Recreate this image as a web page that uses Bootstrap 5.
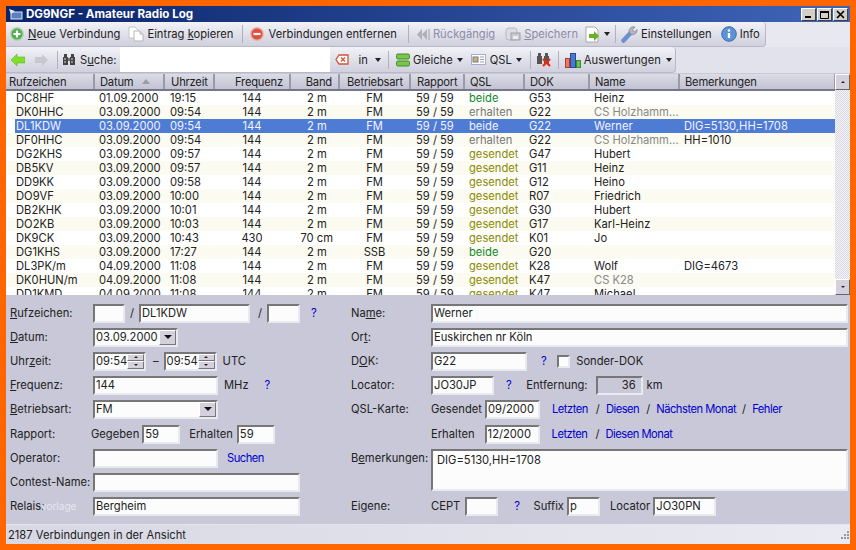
<!DOCTYPE html>
<html lang="de"><head><meta charset="utf-8"><title>DG9NGF - Amateur Radio Log</title>
<link rel="stylesheet" href="https://cdn.jsdelivr.net/npm/bootstrap@5.3.0/dist/css/bootstrap.min.css">
<style>
html,body{height:100%}
body{background:#ff6600;padding:6px;font:11.2px/14px Inter,"Noto Sans",sans-serif;color:#222;overflow:hidden}
.app-win{height:538px;background:#c8c8d8;display:flex;flex-direction:column;overflow:hidden}
.title-bar{height:16px;flex:none;background:linear-gradient(90deg,#0a246a,#3f65b8);color:#fff;font-weight:700;font-size:11.6px;display:flex;align-items:center;padding:0 2px 0 2px;gap:3px}
.title-btns{margin-left:auto;display:flex;gap:1px}
.title-btn{width:15px;height:13px;background:#d4d0c8;border:1px solid;border-color:#fff #404040 #404040 #fff;display:flex;align-items:center;justify-content:center}
.tool-band{height:25px;flex:none;background:#e8e8f0;display:flex}
.tool-band.band-two{background:#e2e2ec;height:26px}
.tool-pill{height:100%;display:flex;align-items:center;background:linear-gradient(#f2f2f7,#d0d0de);border-radius:0 4px 4px 0;border-right:1px solid #b8b8c8;border-bottom:1px solid #b8b8c8}
.p1{width:760px;padding-left:4px}.p2{width:670px;padding-left:5px}
.tool-sep{width:1px;height:18px;background:#b0b0c0;flex:none}
.tx{white-space:nowrap}.dim{color:#8c8ca8}
.search-box{width:210px;height:100%;background:#fff;flex:none}
.tri{width:0;height:0;border:3px solid transparent;border-top:4px solid #222;border-bottom:0;flex:none}
.g3{margin-left:3px}.g4{margin-left:4px}.g5{margin-left:5px}.g6{margin-left:6px}.g7{margin-left:7px}.g8{margin-left:8px}.g9{margin-left:9px}.g10{margin-left:10px}.g11{margin-left:11px}.g12{margin-left:12px}.g14{margin-left:14px}.g15{margin-left:15px}.g16{margin-left:16px}
.list-wrap{height:221px;flex:none;display:flex;background:#fff;margin-top:1px;overflow:hidden}
.list-main{width:829px;overflow:hidden;flex:none}
.log-tbl{table-layout:fixed;width:829px;border-collapse:collapse;margin:0}
.log-tbl th{height:16px;background:linear-gradient(#dcdce6,#c2c2d2);font-weight:400;letter-spacing:-.2px;padding:0 2px 0 3px;border-right:2px solid #9a9aac;border-bottom:2px solid #77778a;white-space:nowrap;overflow:hidden;position:relative}
.log-tbl td{height:14px;padding:0;white-space:nowrap;overflow:hidden;line-height:14px;border:0;background:transparent;color:#222}
.log-tbl tbody tr:nth-child(even){background:#fbfbf2}
.log-tbl tr.row-sel{background:transparent}
.log-tbl tr.row-sel td{color:#f2f4ff;background:#4e7bd4}
.log-tbl tr.row-sel td:first-child{background:linear-gradient(90deg,#fff 9px,#4e7bd4 9px)}
.r{text-align:right;padding-right:6px!important}.c{text-align:center}.pad-a{padding-left:10px!important}.pad-b{padding-left:5px!important}.pad-c{padding-left:6px!important}
.q-b{color:#118a2a!important}.q-e{color:#777!important}.q-g{color:#8b8b00!important}.grey{color:#888!important}
.sort-up{position:absolute;right:13px;top:5px;width:0;height:0;border:4px solid transparent;border-bottom:5px solid #9a9aaa;border-top:0}
.scroll-v{width:15px;flex:none;display:flex;flex-direction:column;background:repeating-conic-gradient(#d8d8e2 0 25%,#f4f4f8 0 50%) 0 0/2px 2px}
.scr-btn{height:16px;background:#d4d0dc;border:1px solid;border-color:#fff #666 #666 #fff;display:flex;align-items:center;justify-content:center;flex:none}
.scr-fill{flex:1}
.form-area{flex:1;display:flex;background:#c8c8d8;min-height:0;padding-top:6px}
.col-l{width:339px;flex:none;padding-left:4px}.col-r{flex:1;padding-left:6px;padding-right:2px}
.f-row{height:24px;display:flex;align-items:center;white-space:nowrap;position:relative}
.f-row-gap{margin-top:1px}
.f-lbl{width:83px;flex:none}.f-lbl-r{width:80px;flex:none}.f-lbl-s{width:81px;flex:none}
.inp{height:19px;background:#fcfcfc;border:2px solid;border-color:#777 #e9e9f0 #e9e9f0 #777;border-radius:0;padding:0 1px;font:inherit;color:#222;flex:none;box-shadow:none;min-height:0;display:block}
.inp:focus{background:#fcfcfc;border-color:#777 #e9e9f0 #e9e9f0 #777;box-shadow:none}
.inp-ro{background:#c8c8d8;text-align:right;padding-right:5px}
.w32{width:32px}.w33{width:33px}.w38{width:38px}.w55{width:55px}.w63{width:63px}.w96{width:96px}.w47{width:47px}.w111{width:111px}.w125{width:125px}.w207{width:207px}.wfull{flex:1;width:auto}
.lnk{color:#0000cc;text-decoration:none;letter-spacing:-.5px}
.joined{display:flex;height:19px;flex:none;background:#fcfcfc;border:2px solid;border-color:#777 #e9e9f0 #e9e9f0 #777;padding-left:1px;align-items:center;justify-content:space-between}
.j53{width:53px}.j85{width:85px}.j125{width:125px}
.spin{display:flex;flex-direction:column;width:17px;height:15px;flex:none}
.spin i{flex:1;background:#d4d0dc;border:1px solid;border-color:#fff #777 #777 #fff;display:flex;align-items:center;justify-content:center}
.up-t,.dn-t{width:0;height:0;border:2px solid transparent}
.up-t{border-bottom:2px solid #222;border-top:0}.dn-t{border-top:2px solid #222;border-bottom:0}
.drop{width:17px;height:15px;flex:none;background:#d4d0dc;border:1px solid;border-color:#fff #777 #777 #fff;display:flex;align-items:center;justify-content:center}
.dn-b{width:0;height:0;border:4px solid transparent;border-top:4px solid #111;border-bottom:0}
.chk{width:13px;height:13px;flex:none;background:#fcfcfc;border:2px solid;border-color:#777 #e9e9f0 #e9e9f0 #777;border-radius:0;appearance:none}
.ghost{position:absolute;left:31px;top:5px;color:#e6e6ee;font-size:10px}
.memo-row{height:48px;display:flex;white-space:nowrap;margin-bottom:0}
.memo-lbl{width:80px;padding-top:5px;flex:none}
.memo-box{flex:1;height:42px;padding:2px 4px;resize:none;line-height:14px;margin-top:3px}
.status-bar{height:20px;flex:none;background:linear-gradient(90deg,#d8d8e4,#eaeaf2);border-top:1px solid #e4e4ec;padding:1px 0 0 2px;display:flex;align-items:center;justify-content:space-between}
svg{flex:none;display:block}
</style></head><body>
<div class="app-win">
 <div class="title-bar">
  <svg width="15" height="13" viewBox="0 0 15 13"><rect x="3" y="4" width="11" height="7" fill="#5b7fc0" stroke="#dfe6f5"/><path d="M1 1l6 2-4 3z" fill="#e8e8f0"/></svg>
  <span>DG9NGF - Amateur Radio Log</span>
  <div class="title-btns">
   <div class="title-btn"><svg width="9" height="9"><rect x="1" y="6" width="6" height="2" fill="#000"/></svg></div>
   <div class="title-btn"><svg width="9" height="9"><path d="M.5 1.5h8v7h-8z" fill="none" stroke="#000"/><rect y="1" width="9" height="2"/></svg></div>
   <div class="title-btn"><svg width="9" height="9"><path d="M1 1l7 7M8 1l-7 7" stroke="#000" stroke-width="1.7"/></svg></div>
  </div>
 </div>
 <div class="tool-band"><div class="tool-pill p1">
  <svg width="14" height="14" viewBox="0 0 14 14"><circle cx="7" cy="7" r="7" fill="#b4d2b4"/><circle cx="7" cy="7" r="5.500" fill="#4fae4f"/><path d="M7 3.500v7M3.500 7h7" stroke="#fff" stroke-width="2.200"/></svg>
  <span class="tx g4"><u>N</u>eue Verbindung</span>
  <svg class="g8" width="16" height="16" viewBox="0 0 16 16"><path d="M1 1h6l3 3v8H1z" fill="#fff" stroke="#c4c4cc"/><path d="M6 5h6l3 3v7H6z" fill="#fff" stroke="#b4b4c0"/><path d="M12 5v3h3" fill="#e4e4ea" stroke="#b4b4c0"/></svg>
  <span class="tx g3">Eintrag <u>k</u>opieren</span>
  <span class="tool-sep g9"></span>
  <svg class="g7" width="14" height="14" viewBox="0 0 14 14"><circle cx="7" cy="7" r="7" fill="#e6b4aa"/><circle cx="7" cy="7" r="5.500" fill="#e0503f"/><path d="M3.500 7h7" stroke="#fff" stroke-width="2.200"/></svg>
  <span class="tx g4">Verbindungen entfernen</span>
  <span class="tool-sep g11"></span>
  <svg class="g7" width="14" height="13" viewBox="0 0 14 13"><path d="M6 1v11L1 6.500zM11 1v11L6 6.500z" fill="#b0b0bc"/><rect x="12" y="1" width="2" height="11" fill="#c0c0cc"/></svg>
  <span class="tx g3 dim">Rückgängig</span>
  <svg class="g10" width="16" height="14" viewBox="0 0 16 14"><rect x="1" y="1" width="11" height="12" rx="3" fill="#dcdce4" stroke="#b8b8c0"/><rect x="6" y="6" width="9" height="7" fill="#c8c8d2" stroke="#a0a0aa"/><rect x="8" y="9" width="5" height="3" fill="#eee"/></svg>
  <span class="tx g3 dim"><u>S</u>peichern</span>
  <svg class="g7" width="16" height="17" viewBox="0 0 16 17"><path d="M1 1h9l3 3v12H1z" fill="#fff" stroke="#aaa"/><path d="M4 8h5V5l5 5-5 5v-3H4z" fill="#6ab02a"/></svg>
  <span class="tri g3"></span>
  <span class="tool-sep g5"></span>
  <svg class="g5" width="17" height="17" viewBox="0 0 17 17"><path d="M2.500 14.500l7.500-8" stroke="#6b90d0" stroke-width="4.500" stroke-linecap="round"/><path d="M8 6a4.500 4.500 0 0 1 6-5l-2.500 3 2 2 2.500-2.500a4.500 4.500 0 0 1-6 5z" fill="#b4b4c4" stroke="#777" stroke-width=".6"/></svg>
  <span class="tx g3">Einstellungen</span>
  <svg class="g9" width="16" height="16" viewBox="0 0 16 16"><circle cx="8" cy="8" r="7.300" fill="#5d92d6" stroke="#3c6cb0"/><circle cx="8" cy="4.500" r="1.300" fill="#fff"/><path d="M8 7v5" stroke="#fff" stroke-width="2.400"/></svg>
  <span class="tx g3">Info</span>
 </div></div>
 <div class="tool-band band-two"><div class="tool-pill p2">
  <svg width="14" height="12" viewBox="0 0 14 12"><path d="M0 6l6-6v3h8v6H6v3z" fill="#7ee02a" stroke="#5aa818" stroke-width=".5"/></svg>
  <svg class="g10" width="13" height="12" viewBox="0 0 13 12"><path d="M13 6L7 0v3H0v6h7v3z" fill="#c8c8d0"/></svg>
  <span class="tool-sep g9"></span>
  <svg class="g4" width="14" height="13" viewBox="0 0 14 13"><path d="M1 4h5v8H1zM8 4h5v8H8zM2 1h3v3H2zM9 1h3v3H9z" fill="#444"/><rect x="6" y="5" width="2" height="3" fill="#777"/><path d="M2 6h2M9 6h2M2 9h2M9 9h2" stroke="#ddd"/></svg>
  <span class="tx g4">S<u>u</u>che:</span>
  <div class="search-box g3"></div>
  <svg class="g5" width="14" height="11" viewBox="0 0 14 11"><path d="M4 1h9v9H4L1 5.500z" fill="#fff" stroke="#d0523a" stroke-width="1.300"/><path d="M6 3.500l4 4M10 3.500l-4 4" stroke="#d0523a" stroke-width="1.300"/></svg>
  <span class="tx g10">in</span><span class="tri g7"></span>
  <span class="tool-sep g7"></span>
  <svg class="g7" width="14" height="14" viewBox="0 0 14 14"><rect x=".5" y="1" width="13" height="5" rx="1.500" fill="#79c64a" stroke="#3f8a2a"/><rect x=".5" y="8" width="13" height="5" rx="1.500" fill="#79c64a" stroke="#3f8a2a"/></svg>
  <span class="tx g3">Gleiche</span><span class="tri g4"></span>
  <svg class="g8" width="15" height="11" viewBox="0 0 15 11"><rect x=".5" y=".5" width="14" height="10" fill="#fff" stroke="#aac"/><rect x="2" y="3" width="5" height="5" fill="#e0b040" stroke="#5b7fc0"/><path d="M9 3h4M9 5.500h4M9 8h4" stroke="#99a"/></svg>
  <span class="tx g4">QSL</span><span class="tri g4"></span>
  <span class="tool-sep g8"></span>
  <svg class="g5" width="16" height="15" viewBox="0 0 16 15"><path d="M1 4h5v8H1zM8 4h5v8H8zM2 1h3v3H2zM9 1h3v3H9z" fill="#555"/><path d="M7 7l7 7M14 7l-7 7" stroke="#e02a1a" stroke-width="2.200"/></svg>
  <span class="tool-sep g6"></span>
  <svg class="g6" width="16" height="16" viewBox="0 0 16 16"><rect x=".5" y="6.500" width="4" height="9" fill="#e87a68" stroke="#b03a30"/><rect x="5.500" y="1.500" width="5" height="14" fill="#4a78d0" stroke="#2a4a90"/><rect x="11.500" y="8.500" width="4" height="7" fill="#6cc050" stroke="#3a8a30"/></svg>
  <span class="tx g3">Auswertungen</span><span class="tri g5"></span>
 </div></div>
 <div class="list-wrap">
  <div class="list-main">
  <table class="log-tbl">
   <colgroup><col style="width:88px"><col style="width:70px"><col style="width:50px"><col style="width:76px"><col style="width:49px"><col style="width:71px"><col style="width:54px"><col style="width:60px"><col style="width:65px"><col style="width:90px"><col style="width:156px"></colgroup>
   <thead><tr><th>Rufzeichen</th><th class="pad-b">Datum<span class="sort-up"></span></th><th class="pad-c">Uhrzeit</th><th class="r">Frequenz</th><th class="r">Band</th><th class="c">Betriebsart</th><th class="pad-c">Rapport</th><th class="pad-b">QSL</th><th class="pad-b">DOK</th><th class="pad-b">Name</th><th class="pad-b">Bemerkungen</th></tr></thead>
   <tbody id="rows">
   <tr><td class="pad-a">DC8HF</td><td class="pad-b">01.09.2000</td><td class="pad-c">19:15</td><td class="c">144</td><td class="r">2 m&nbsp;&nbsp;</td><td class="c">FM</td><td class="pad-c">59 / 59</td><td class="pad-b q-b">beide</td><td class="pad-b">G53</td><td class="pad-b">Heinz</td><td class="pad-b"></td></tr>
   <tr><td class="pad-a">DK0HHC</td><td class="pad-b">03.09.2000</td><td class="pad-c">09:54</td><td class="c">144</td><td class="r">2 m&nbsp;&nbsp;</td><td class="c">FM</td><td class="pad-c">59 / 59</td><td class="pad-b q-e">erhalten</td><td class="pad-b">G22</td><td class="pad-b grey">CS Holzhamm…</td><td class="pad-b"></td></tr>
   <tr class="row-sel"><td class="pad-a">DL1KDW</td><td class="pad-b">03.09.2000</td><td class="pad-c">09:54</td><td class="c">144</td><td class="r">2 m&nbsp;&nbsp;</td><td class="c">FM</td><td class="pad-c">59 / 59</td><td class="pad-b">beide</td><td class="pad-b">G22</td><td class="pad-b">Werner</td><td class="pad-b">DIG=5130,HH=1708</td></tr>
   <tr><td class="pad-a">DF0HHC</td><td class="pad-b">03.09.2000</td><td class="pad-c">09:54</td><td class="c">144</td><td class="r">2 m&nbsp;&nbsp;</td><td class="c">FM</td><td class="pad-c">59 / 59</td><td class="pad-b q-e">erhalten</td><td class="pad-b">G22</td><td class="pad-b grey">CS Holzhamm…</td><td class="pad-b">HH=1010</td></tr>
   <tr><td class="pad-a">DG2KHS</td><td class="pad-b">03.09.2000</td><td class="pad-c">09:57</td><td class="c">144</td><td class="r">2 m&nbsp;&nbsp;</td><td class="c">FM</td><td class="pad-c">59 / 59</td><td class="pad-b q-g">gesendet</td><td class="pad-b">G47</td><td class="pad-b">Hubert</td><td class="pad-b"></td></tr>
   <tr><td class="pad-a">DB5KV</td><td class="pad-b">03.09.2000</td><td class="pad-c">09:57</td><td class="c">144</td><td class="r">2 m&nbsp;&nbsp;</td><td class="c">FM</td><td class="pad-c">59 / 59</td><td class="pad-b q-g">gesendet</td><td class="pad-b">G11</td><td class="pad-b">Heinz</td><td class="pad-b"></td></tr>
   <tr><td class="pad-a">DD9KK</td><td class="pad-b">03.09.2000</td><td class="pad-c">09:58</td><td class="c">144</td><td class="r">2 m&nbsp;&nbsp;</td><td class="c">FM</td><td class="pad-c">59 / 59</td><td class="pad-b q-g">gesendet</td><td class="pad-b">G12</td><td class="pad-b">Heino</td><td class="pad-b"></td></tr>
   <tr><td class="pad-a">DO9VF</td><td class="pad-b">03.09.2000</td><td class="pad-c">10:00</td><td class="c">144</td><td class="r">2 m&nbsp;&nbsp;</td><td class="c">FM</td><td class="pad-c">59 / 59</td><td class="pad-b q-g">gesendet</td><td class="pad-b">R07</td><td class="pad-b">Friedrich</td><td class="pad-b"></td></tr>
   <tr><td class="pad-a">DB2KHK</td><td class="pad-b">03.09.2000</td><td class="pad-c">10:01</td><td class="c">144</td><td class="r">2 m&nbsp;&nbsp;</td><td class="c">FM</td><td class="pad-c">59 / 59</td><td class="pad-b q-g">gesendet</td><td class="pad-b">G30</td><td class="pad-b">Hubert</td><td class="pad-b"></td></tr>
   <tr><td class="pad-a">DO2KB</td><td class="pad-b">03.09.2000</td><td class="pad-c">10:03</td><td class="c">144</td><td class="r">2 m&nbsp;&nbsp;</td><td class="c">FM</td><td class="pad-c">59 / 59</td><td class="pad-b q-g">gesendet</td><td class="pad-b">G17</td><td class="pad-b">Karl-Heinz</td><td class="pad-b"></td></tr>
   <tr><td class="pad-a">DK9CK</td><td class="pad-b">03.09.2000</td><td class="pad-c">10:43</td><td class="c">430</td><td class="r">70 cm</td><td class="c">FM</td><td class="pad-c">59 / 59</td><td class="pad-b q-g">gesendet</td><td class="pad-b">K01</td><td class="pad-b">Jo</td><td class="pad-b"></td></tr>
   <tr><td class="pad-a">DG1KHS</td><td class="pad-b">03.09.2000</td><td class="pad-c">17:27</td><td class="c">144</td><td class="r">2 m&nbsp;&nbsp;</td><td class="c">SSB</td><td class="pad-c">59 / 59</td><td class="pad-b q-b">beide</td><td class="pad-b">G20</td><td class="pad-b"></td><td class="pad-b"></td></tr>
   <tr><td class="pad-a">DL3PK/m</td><td class="pad-b">04.09.2000</td><td class="pad-c">11:08</td><td class="c">144</td><td class="r">2 m&nbsp;&nbsp;</td><td class="c">FM</td><td class="pad-c">59 / 59</td><td class="pad-b q-g">gesendet</td><td class="pad-b">K28</td><td class="pad-b">Wolf</td><td class="pad-b">DIG=4673</td></tr>
   <tr><td class="pad-a">DK0HUN/m</td><td class="pad-b">04.09.2000</td><td class="pad-c">11:08</td><td class="c">144</td><td class="r">2 m&nbsp;&nbsp;</td><td class="c">FM</td><td class="pad-c">59 / 59</td><td class="pad-b q-g">gesendet</td><td class="pad-b">K47</td><td class="pad-b grey">CS K28</td><td class="pad-b"></td></tr>
   <tr><td class="pad-a">DD1KMD</td><td class="pad-b">04.09.2000</td><td class="pad-c">11:08</td><td class="c">144</td><td class="r">2 m&nbsp;&nbsp;</td><td class="c">FM</td><td class="pad-c">59 / 59</td><td class="pad-b q-g">gesendet</td><td class="pad-b">K47</td><td class="pad-b">Michael</td><td class="pad-b"></td></tr>
   </tbody>
  </table>
  </div>
  <div class="scroll-v">
   <div class="scr-btn"><span class="up-t"></span></div><div class="scr-fill"></div><div class="scr-btn"><span class="dn-t"></span></div>
  </div>
 </div>
 <div class="form-area">
  <div class="col-l">
   <div class="f-row"><span class="f-lbl"><u>R</u>ufzeichen:</span><input class="form-control inp w32" value=""><span class="g5">/</span><input class="form-control inp w111 g5" value="DL1KDW"><span class="g8">/</span><input class="form-control inp w33 g5" value=""><a class="lnk g11" href="#">?</a></div>
   <div class="f-row"><span class="f-lbl"><u>D</u>atum:</span><div class="joined j85"><span>03.09.2000</span><span class="drop"><span class="dn-b"></span></span></div></div>
   <div class="f-row"><span class="f-lbl">Uhr<u>z</u>eit:</span><div class="joined j53"><span>09:54</span><span class="spin"><i><span class="up-t"></span></i><i><span class="dn-t"></span></i></span></div><span class="g7">–</span><div class="joined j53 g5"><span>09:54</span><span class="spin"><i><span class="up-t"></span></i><i><span class="dn-t"></span></i></span></div><span class="g6">UTC</span></div>
   <div class="f-row"><span class="f-lbl"><u>F</u>requenz:</span><input class="form-control inp w125" value="144"><span class="g6">MHz</span><a class="lnk g16" href="#">?</a></div>
   <div class="f-row"><span class="f-lbl"><u>B</u>etriebsart:</span><div class="joined j125"><span>FM</span><span class="drop"><span class="dn-b"></span></span></div></div>
   <div class="f-row f-row-gap"><span class="f-lbl-s">Rapport:</span><span>Gegeben</span><input class="form-control inp w38 g3" value="59"><span class="g9">Erhalten</span><input class="form-control inp w38 g4" value="59"></div>
   <div class="f-row"><span class="f-lbl">Operator:</span><input class="form-control inp w125" value=""><a class="lnk g9" href="#">Suchen</a></div>
   <div class="f-row"><span class="f-lbl">Contest-Name:</span><input class="form-control inp w207" value=""></div>
   <div class="f-row"><span class="f-lbl">Relais:</span><span class="ghost">vorlage</span><input class="form-control inp w207" value="Bergheim"></div>
  </div>
  <div class="col-r">
   <div class="f-row"><span class="f-lbl-r">Na<u>m</u>e:</span><input class="form-control inp wfull" value="Werner"></div>
   <div class="f-row"><span class="f-lbl-r">Or<u>t</u>:</span><input class="form-control inp wfull" value="Euskirchen nr Köln"></div>
   <div class="f-row"><span class="f-lbl-r">D<u>O</u>K:</span><input class="form-control inp w96" value="G22"><a class="lnk g14" href="#">?</a><input class="chk g11" type="checkbox"><span class="g6">Sonder-DOK</span></div>
   <div class="f-row"><span class="f-lbl-r">Locator:</span><input class="form-control inp w63" value="JO30JP"><a class="lnk g12" href="#">?</a><span class="g15">Entfernung:</span><input class="form-control inp inp-ro w47 g8" value="36" readonly><span class="g4">km</span></div>
   <div class="f-row"><span class="f-lbl-r">QSL-Karte:</span><span>Gesendet</span><input class="form-control inp w55 g3" value="09/2000"><a class="lnk g12" href="#">Letzten</a><span class="g8">/</span><a class="lnk g6" href="#">Diesen</a><span class="g7">/</span><a class="lnk g6" href="#">Nächsten Monat</a><span class="g6">/</span><a class="lnk g6" href="#">Fehler</a></div>
   <div class="f-row f-row-gap"><span class="f-lbl-r"></span><span>Erhalten</span><input class="form-control inp w55 g10" value="12/2000"><a class="lnk g12" href="#">Letzten</a><span class="g8">/</span><a class="lnk g6" href="#">Diesen Monat</a></div>
   <div class="memo-row"><span class="memo-lbl">B<u>e</u>merkungen:</span><textarea class="form-control inp memo-box">DIG=5130,HH=1708</textarea></div>
   <div class="f-row"><span class="f-lbl-r">Eigene:</span><span>CEPT</span><input class="form-control inp w33 g5" value=""><a class="lnk g16" href="#">?</a><span class="g14">Suffix</span><input class="form-control inp w33 g3" value="p"><span class="g10">Locator</span><input class="form-control inp w63 g3" value="JO30PN"></div>
  </div>
 </div>
 <div class="status-bar"><span>2187 Verbindungen in der Ansicht</span>
  <svg width="12" height="12" viewBox="0 0 12 12"><path d="M9 2h2v2H9zM6 5h2v2H6zM9 5h2v2H9zM3 8h2v2H3zM6 8h2v2H6zM9 8h2v2H9z" fill="#999"/></svg></div>
</div>
</body></html>
